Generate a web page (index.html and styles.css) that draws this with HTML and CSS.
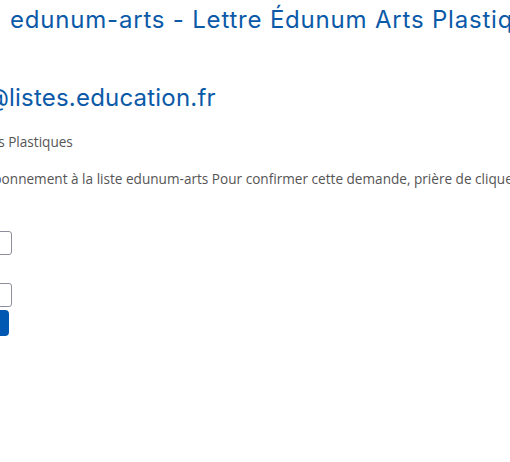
FILE: index.html
```html
<!DOCTYPE html>
<html lang="fr">
<head>
<meta charset="utf-8">
<title>edunum-arts</title>
<link rel="stylesheet" href="styles.css">
</head>
<body>
<header class="top">
  <h1 class="list-title">edunum-arts - Lettre Édunum Arts Plastiques</h1>
</header>
<main class="content">
  <h2 class="list-address">edunum-arts@listes.education.fr</h2>
  <p class="subject">Lettre Édunum Arts Plastiques</p>
  <p class="message">Demande d'abonnement à la liste edunum-arts Pour confirmer cette demande, prière de cliquer sur le bouton ci-dessous :</p>
  <form class="form">
    <input class="field field-first" type="text" aria-label="Adresse">
    <input class="field" type="text" aria-label="Nom">
    <button class="btn" type="button">Confirmer</button>
  </form>
</main>
</body>
</html>
```
FILE: styles.css
```css
html, body {
  margin: 0;
  padding: 0;
  background: #ffffff;
  overflow: hidden;
}
body {
  width: 510px;
  height: 462px;
  font-family: "Open Sans", "Liberation Sans", sans-serif;
  color: #555555;
}
.top {
  padding: 5px 0 0 10px;
  white-space: nowrap;
}
.list-title {
  margin: 0;
  font-family: Inter, "Open Sans", sans-serif;
  font-weight: 400;
  font-size: 24px;
  letter-spacing: 0.8px;
  line-height: 30px;
  color: #0b5aa8;
}
.content {
  margin-left: -110px;
  white-space: nowrap;
}
.list-address {
  margin: 48px 0 0 -53px;
  font-family: Inter, "Open Sans", sans-serif;
  font-weight: 400;
  font-size: 24px;
  letter-spacing: 0.2px;
  line-height: 30px;
  color: #0b5aa8;
}
.subject {
  margin: 19px 0 0 -9px;
  font-size: 13.6px;
  line-height: 20px;
}
.message {
  margin: 17px 0 0 19px;
  font-size: 13.6px;
  line-height: 20px;
}
.form {
  display: flex;
  flex-direction: column;
  align-items: flex-start;
  margin-top: 42px;
}
.field {
  box-sizing: border-box;
  width: 122px;
  height: 24px;
  border: 1px solid #8e8e9c;
  border-radius: 3px;
  background: #fff;
  padding: 0;
  margin: 0;
}
.field-first {
  margin-bottom: 28px;
}
.btn {
  margin-top: 3px;
  box-sizing: border-box;
  width: 119px;
  height: 26px;
  border: 0;
  border-radius: 4px;
  background: #0058b3;
  color: #fff;
  font-family: "Open Sans", sans-serif;
  font-size: 13px;
  padding: 0;
}
```
